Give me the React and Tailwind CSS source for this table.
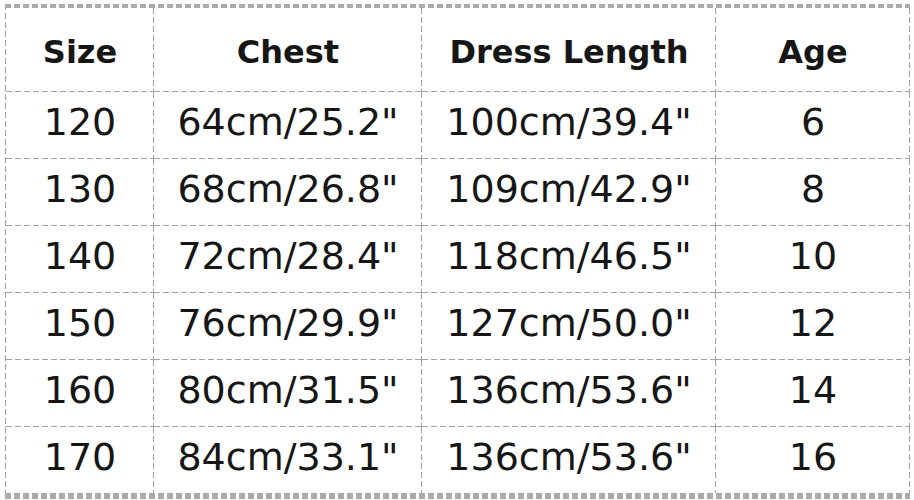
const HEAD = ['Size', 'Chest', 'Dress Length', 'Age']

const ROWS = [
  ['120', '64cm/25.2"', '100cm/39.4"', '6'],
  ['130', '68cm/26.8"', '109cm/42.9"', '8'],
  ['140', '72cm/28.4"', '118cm/46.5"', '10'],
  ['150', '76cm/29.9"', '127cm/50.0"', '12'],
  ['160', '80cm/31.5"', '136cm/53.6"', '14'],
  ['170', '84cm/33.1"', '136cm/53.6"', '16'],
]

// dashed right + bottom rule drawn with gradients (6px dash, 3px gap)
const LINES_RB =
  '[background:repeating-linear-gradient(to_bottom,#a3a3a3_0_6px,transparent_6px_9px)_right_top/1px_100%_no-repeat,repeating-linear-gradient(to_right,#a3a3a3_0_6px,transparent_6px_9px)_left_bottom/100%_1px_no-repeat]'
const LINES_R =
  '[background:repeating-linear-gradient(to_bottom,#a3a3a3_0_6px,transparent_6px_9px)_right_top/1px_100%_no-repeat]'
const FRAME =
  '[background:repeating-linear-gradient(to_right,#ababab_0_6px,transparent_6px_9px)_left_top/100%_4px_no-repeat,repeating-linear-gradient(to_right,#ababab_0_6px,transparent_6px_9px)_left_bottom/100%_6px_no-repeat,repeating-linear-gradient(to_bottom,#a3a3a3_0_6px,transparent_6px_9px)_left_top/1px_100%_no-repeat]'

function Cell({ children, head, lastRow }) {
  return (
    <div
      className={`flex items-center justify-center ${lastRow ? LINES_R : LINES_RB} ${
        head
          ? 'h-[84px] text-[32px] font-bold pt-[3px]'
          : lastRow
            ? 'h-[66px] text-[38px] pb-[6px]'
            : 'h-[67px] text-[38px] pb-[6px]'
      }`}
    >
      {children}
    </div>
  )
}

export default function App() {
  return (
    <div className="w-[914px] h-[500px] bg-white overflow-hidden pt-[4px] pl-[5px]">
      <div
        className={`w-[905px] grid grid-cols-[148px_268px_294px_194px] pt-[4px] pb-[6px] pl-px text-[#161616] ${FRAME}`}
        style={{ fontFamily: '"DejaVu Sans", Verdana, sans-serif' }}
      >
        {HEAD.map(h => (
          <Cell key={h} head>{h}</Cell>
        ))}
        {ROWS.map((r, ri) =>
          r.map((v, ci) => (
            <Cell key={`${ri}-${ci}`} lastRow={ri === ROWS.length - 1}>
              {v}
            </Cell>
          ))
        )}
      </div>
    </div>
  )
}
